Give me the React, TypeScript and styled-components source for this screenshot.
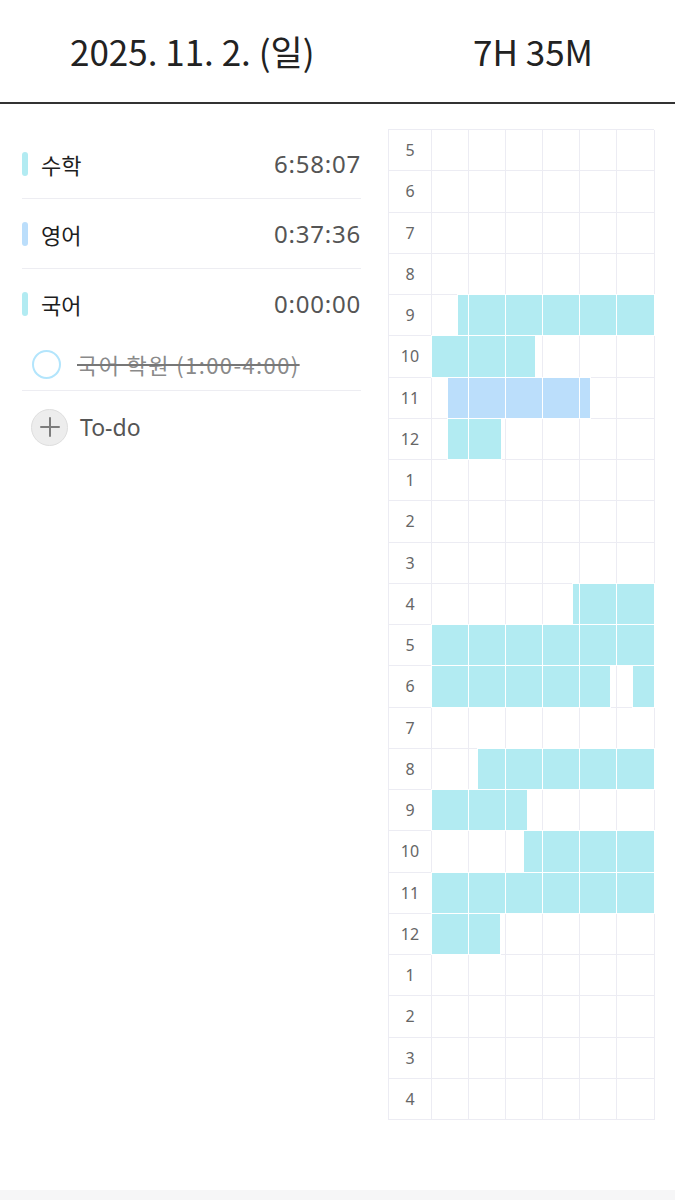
import React from "react";
import styled, { createGlobalStyle } from "styled-components";

const GlobalStyle = createGlobalStyle`
  html, body {
    margin: 0;
    padding: 0;
    background: #ffffff;
  }
  body {
    font-family: "Noto Sans", "Noto Sans CJK KR", sans-serif;
    color: #1e1e1e;
  }
`;

const CYAN = "#b2ebf2";
const BLUE = "#bbdefb";

type Segment = { start: number; end: number; color: string };

const hours = [5, 6, 7, 8, 9, 10, 11, 12, 1, 2, 3, 4, 5, 6, 7, 8, 9, 10, 11, 12, 1, 2, 3, 4];

// minutes studied inside each hour row, keyed by row index
const records: Record<number, Segment[]> = {
  4: [{ start: 7.3, end: 60, color: CYAN }],
  5: [{ start: 0, end: 28, color: CYAN }],
  6: [{ start: 4.4, end: 42.8, color: BLUE }],
  7: [{ start: 4.4, end: 19, color: CYAN }],
  11: [{ start: 38.3, end: 60, color: CYAN }],
  12: [{ start: 0, end: 60, color: CYAN }],
  13: [
    { start: 0, end: 48.2, color: CYAN },
    { start: 54.3, end: 60, color: CYAN },
  ],
  15: [{ start: 12.5, end: 60, color: CYAN }],
  16: [{ start: 0, end: 25.9, color: CYAN }],
  17: [{ start: 25, end: 60, color: CYAN }],
  18: [{ start: 0, end: 60, color: CYAN }],
  19: [{ start: 0, end: 18.6, color: CYAN }],
};

const subjects = [
  { name: "수학", time: "6:58:07", color: CYAN },
  { name: "영어", time: "0:37:36", color: BLUE },
  { name: "국어", time: "0:00:00", color: CYAN },
];

const App = () => {
  return (
    <Page>
      <GlobalStyle />
      <Header>
        <HeaderText>2025. 11. 2. (일)</HeaderText>
        <HeaderText>7H 35M</HeaderText>
      </Header>
      <Main>
        <List>
          {subjects.map((s, i) => (
            <React.Fragment key={s.name}>
              {i > 0 && <Divider />}
              <SubjectRow>
                <ColorBar $color={s.color} />
                <SubjectName>{s.name}</SubjectName>
                <SubjectTime>{s.time}</SubjectTime>
              </SubjectRow>
            </React.Fragment>
          ))}
          <TodoRow>
            <TodoCircle />
            <TodoText>국어 학원 (1:00-4:00)</TodoText>
          </TodoRow>
          <Divider />
          <AddRow>
            <AddButton>
              <svg width="22" height="22" viewBox="0 0 22 22">
                <path d="M11 2v18M2 11h18" stroke="#7d7d7d" strokeWidth="2" strokeLinecap="round" />
              </svg>
            </AddButton>
            <AddText>To-do</AddText>
          </AddRow>
        </List>
        <Grid>
          {hours.map((h, row) => (
            <React.Fragment key={row}>
              <HourLabel>{h}</HourLabel>
              {[0, 1, 2, 3, 4, 5].map((col) => {
                const from = col * 10;
                const to = from + 10;
                const fills = (records[row] || [])
                  .filter((seg) => seg.end > from && seg.start < to)
                  .map((seg) => ({
                    left: (Math.max(seg.start, from) - from) / 10,
                    right: (to - Math.min(seg.end, to)) / 10,
                    color: seg.color,
                  }));
                return (
                  <Cell key={col}>
                    {fills.map((f, k) => (
                      <Fill
                        key={k}
                        $color={f.color}
                        style={{ left: `${f.left * 100}%`, right: `${f.right * 100}%` }}
                      />
                    ))}
                  </Cell>
                );
              })}
            </React.Fragment>
          ))}
        </Grid>
      </Main>
      <TabBar />
    </Page>
  );
};

export default App;

const Page = styled.div`
  width: 675px;
  min-height: 1200px;
  display: flex;
  flex-direction: column;
  background: #fff;
`;

const Header = styled.div`
  height: 102px;
  border-bottom: 2px solid #333;
  display: flex;
  align-items: center;
  justify-content: space-between;
  padding: 0 82px 0 70px;
`;

const HeaderText = styled.div`
  font-family: "Noto Sans CJK KR", "Noto Sans", sans-serif;
  font-size: 35px;
  letter-spacing: 0;
  color: #222;
  padding-bottom: 2px;
`;

const Main = styled.div`
  display: flex;
  align-items: flex-start;
  gap: 27px;
  padding: 25px 21px 0 22px;
`;

const List = styled.div`
  width: 339px;
  display: flex;
  flex-direction: column;
`;

const SubjectRow = styled.div`
  height: 69px;
  display: flex;
  align-items: center;
`;

const ColorBar = styled.div<{ $color: string }>`
  width: 6px;
  height: 24px;
  border-radius: 3px;
  background: ${(p) => p.$color};
  margin-right: 13px;
`;

const SubjectName = styled.div`
  font-family: "Noto Sans CJK KR", sans-serif;
  font-size: 22px;
  color: #1e1e1e;
  flex: 1;
`;

const SubjectTime = styled.div`
  font-family: "Noto Sans", sans-serif;
  font-size: 24px;
  color: #555;
  letter-spacing: 0.8px;
`;

const Divider = styled.div`
  height: 1px;
  background: #ededf2;
`;

const TodoRow = styled.div`
  height: 52px;
  display: flex;
  align-items: center;
  padding-left: 10px;
`;

const TodoCircle = styled.div`
  width: 25px;
  height: 25px;
  border-radius: 50%;
  border: 2px solid #b3e5fc;
  margin-right: 16px;
`;

const TodoText = styled.div`
  font-family: "Noto Sans CJK KR", sans-serif;
  font-size: 22px;
  letter-spacing: 1.4px;
  color: #8a8a8a;
  text-decoration: line-through;
  text-decoration-color: #777;
`;

const AddRow = styled.div`
  height: 72px;
  display: flex;
  align-items: center;
  padding-left: 9px;
`;

const AddButton = styled.div`
  width: 35px;
  height: 35px;
  border-radius: 50%;
  background: #ededed;
  border: 1px solid #dedede;
  display: flex;
  align-items: center;
  justify-content: center;
  margin-right: 12px;
`;

const AddText = styled.div`
  font-family: "Noto Sans", sans-serif;
  font-size: 23px;
  color: #555;
`;

const Grid = styled.div`
  width: 266px;
  height: 991px;
  display: grid;
  grid-template-columns: 43px 37px 37px 37px 37px 37px 38px;
  grid-template-rows: repeat(24, 1fr);
  border-top: 1px solid #ececf3;
  border-left: 1px solid #ececf3;
  box-sizing: border-box;
`;

const HourLabel = styled.div`
  border-right: 1px solid #ececf3;
  border-bottom: 1px solid #ececf3;
  display: flex;
  align-items: center;
  justify-content: center;
  font-family: "Noto Sans", sans-serif;
  font-size: 16px;
  color: #666;
`;

const Cell = styled.div`
  position: relative;
  border-right: 1px solid #ececf3;
  border-bottom: 1px solid #ececf3;
`;

const Fill = styled.div<{ $color: string }>`
  position: absolute;
  top: 0;
  bottom: 0;
  background: ${(p) => p.$color};
  box-shadow: 0 0 0 1px #fff;
`;

const TabBar = styled.div`
  margin-top: auto;
  height: 10px;
  background: #f6f6f7;
`;
